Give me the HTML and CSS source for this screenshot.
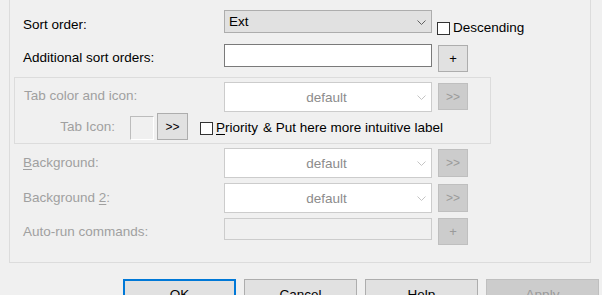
FILE: index.html
```html
<!DOCTYPE html>
<html lang="en">
<head>
    <meta charset="UTF-8">
    <title>Tab options</title>
    <link rel="stylesheet" href="styles.css">
</head>
<body>
    <div class="panel">
        <!-- sort order -->
        <div class="row row-sort">
            <label class="lbl">Sort order:</label>
            <div class="combo">
                <span class="combo-text">Ext</span>
                <svg class="chev" width="9" height="5" viewBox="0 0 9 5"><path d="M0.5 0.5 L4.5 4.5 L8.5 0.5" fill="none" stroke="#606060" stroke-width="1"/></svg>
            </div>
            <div class="check check-desc"><span class="box"></span>Descending</div>
        </div>

        <div class="row row-extra">
            <label class="lbl">Additional sort orders:</label>
            <div class="edit"></div>
            <button class="btn btn-small btn-plus">+</button>
        </div>

        <!-- tab colour group -->
        <div class="group">
            <div class="row row-tabcolor">
                <label class="lbl lbl-dis">Tab color and icon:</label>
                <div class="combo combo-dis">
                    <span class="combo-text">default</span>
                    <svg class="chev" width="9" height="5" viewBox="0 0 9 5"><path d="M0.5 0.5 L4.5 4.5 L8.5 0.5" fill="none" stroke="#c4c4c4" stroke-width="1"/></svg>
                </div>
                <button class="btn btn-small btn-dis">&gt;&gt;</button>
            </div>
            <div class="row row-tabicon">
                <label class="lbl lbl-dis lbl-icon">Tab Icon:</label>
                <div class="icon-box"></div>
                <button class="btn btn-icon">&gt;&gt;</button>
                <div class="check check-prio"><span class="box"></span><u>P</u>riority</div>
                <span class="hint">&amp; Put here more intuitive label</span>
            </div>
        </div>

        <div class="row row-bg">
            <label class="lbl lbl-dis"><u>B</u>ackground:</label>
            <div class="combo combo-dis">
                <span class="combo-text">default</span>
                <svg class="chev" width="9" height="5" viewBox="0 0 9 5"><path d="M0.5 0.5 L4.5 4.5 L8.5 0.5" fill="none" stroke="#c4c4c4" stroke-width="1"/></svg>
            </div>
            <button class="btn btn-small btn-dis">&gt;&gt;</button>
        </div>

        <div class="row row-bg2">
            <label class="lbl lbl-dis">Background <u>2</u>:</label>
            <div class="combo combo-dis">
                <span class="combo-text">default</span>
                <svg class="chev" width="9" height="5" viewBox="0 0 9 5"><path d="M0.5 0.5 L4.5 4.5 L8.5 0.5" fill="none" stroke="#c4c4c4" stroke-width="1"/></svg>
            </div>
            <button class="btn btn-small btn-dis">&gt;&gt;</button>
        </div>

        <div class="row row-auto">
            <label class="lbl lbl-dis">Auto-run commands:</label>
            <div class="edit edit-dis"></div>
            <button class="btn btn-small btn-dis btn-plus">+</button>
        </div>
    </div>

    <!-- dialog buttons -->
    <div class="footer">
        <button class="btn btn-dlg btn-default">OK</button>
        <button class="btn btn-dlg">Cancel</button>
        <button class="btn btn-dlg">Help</button>
        <button class="btn btn-dlg btn-dis">Apply</button>
    </div>
</body>
</html>
```

FILE: styles.css
```css
/* base */
body { margin: 0; background-color: #f0f0f0; color: #000; font-family: "Liberation Sans", Arial, sans-serif; font-size: 13.5px; overflow: hidden; }
u { text-decoration: underline; text-underline-offset: 2px; }

/* outer panel - top edge is scrolled off */
.panel { margin-left: 9px; width: 582px; height: 263px; box-sizing: border-box; padding-top: 10px; border: 1px solid #dcdcdc; border-top: none; }

.row { display: flex; align-items: flex-start; }
.lbl { display: block; box-sizing: border-box; width: 214px; padding-left: 13px; line-height: 16px; white-space: nowrap; }
.lbl-dis { color: #a0a0a0; }

/* combo boxes */
.combo { width: 208px; box-sizing: border-box; border: 1px solid #adadad; background-color: #e1e1e1; display: flex; align-items: center; justify-content: space-between; padding: 0 5px 0 5px; }
.combo .chev { margin-top: 1px; }
.combo-dis { background-color: #fff; border-color: #cccccc; height: 30px; }
.combo-dis .combo-text { flex-grow: 1; text-align: center; color: #8c8c8c; padding-left: 6px; }

.edit { width: 208px; height: 23px; box-sizing: border-box; border: 1px solid #7a7a7a; background-color: #fff; }
.edit-dis { border-color: #cccccc; background-color: #f0f0f0; height: 22px; }

/* buttons */
.btn { box-sizing: border-box; font-family: inherit; font-size: 13.5px; background-color: #e1e1e1; border: 1px solid #adadad; color: #000; padding: 0; margin: 0; }
.btn-small { width: 30px; height: 27px; margin-left: 6px; font-size: 12px; }
.btn-plus { font-size: 13px; }
.btn-dis { background-color: #cccccc; border-color: #bfbfbf; color: #9a9a9a; }

/* checkboxes */
.check { display: flex; align-items: center; white-space: nowrap; line-height: 16px; }
.box { width: 13px; height: 13px; box-sizing: border-box; border: 1px solid #333; background-color: #fff; margin-right: 3px; }

/* row 1 */
.row-sort { height: 23px; }
.row-sort .lbl { margin-top: 7px; }
.row-sort .combo { height: 23px; padding-left: 4px; }
.check-desc { margin-left: 5px; margin-top: 10px; }

.row-extra { margin-top: 11px; height: 28px; }
.row-extra .lbl { margin-top: 6px; }
.row-extra .btn { margin-top: 1px; }

/* group box */
.group { margin: 5px 0 0 4px; width: 477px; height: 67px; box-sizing: border-box; border: 1px solid #dcdcdc; }
.group .lbl { width: 209px; padding-left: 9px; }
.row-tabcolor { margin-top: 4px; height: 30px; }
.row-tabcolor .lbl { margin-top: 6px; }
.row-tabcolor .btn { margin-top: 1px; }

.row-tabicon { margin-top: 1px; height: 28px; }
.group .lbl-icon { width: 115px; padding: 0 15px 0 0; text-align: right; margin-top: 6px; }
.icon-box { width: 24px; height: 24px; margin-top: 3px; box-sizing: border-box; border: 1px solid #bcbcbc; border-right-color: #fff; border-bottom-color: #fff; }
.btn-icon { width: 31px; height: 27px; margin-left: 3px; font-size: 12px; }
.check-prio { margin-left: 12px; margin-top: 7px; }
.hint { margin-left: 5px; margin-top: 7px; line-height: 16px; white-space: nowrap; }

/* lower rows */
.row-bg { margin-top: 4px; height: 30px; }
.row-bg2 { margin-top: 5px; height: 30px; }
.row-bg .lbl, .row-bg2 .lbl { margin-top: 7px; }
.row-bg .btn, .row-bg2 .btn { margin-top: 1px; height: 28px; }
.row-auto { margin-top: 5px; height: 27px; }
.row-auto .lbl { margin-top: 6px; }

/* footer */
.footer { display: flex; gap: 8px; margin: 16px 0 0 123px; }
.btn-dlg { width: 113px; height: 27px; padding-top: 3px; }
.btn-default { border: 2px solid #0078d7; }
```
